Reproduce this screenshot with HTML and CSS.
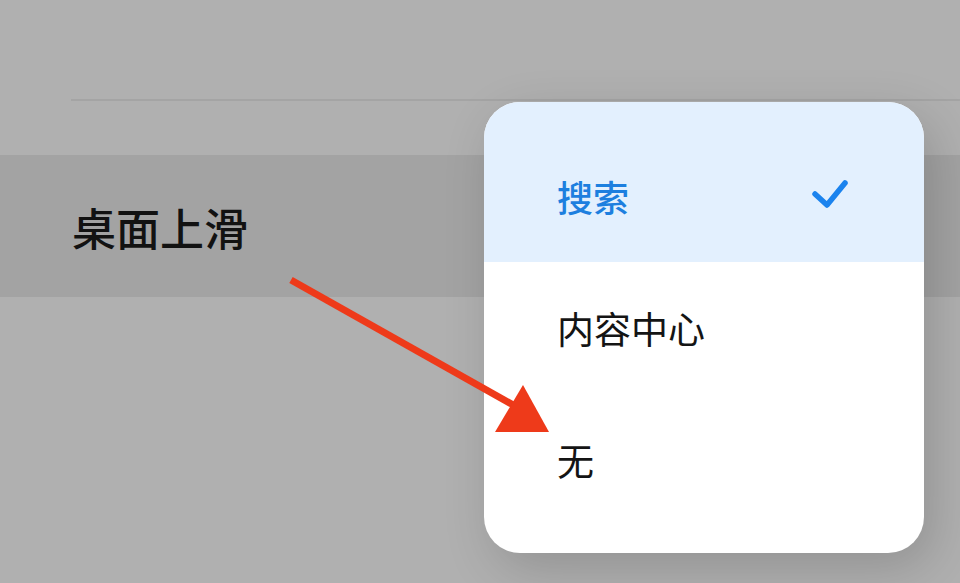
FILE: index.html
```html
<!DOCTYPE html>
<html lang="zh">
<head>
<meta charset="utf-8">
<link rel="stylesheet" href="styles.css">
</head>
<body>
<div class="screen">
  <div class="top-area">
    <div class="divider"></div>
  </div>
  <div class="row">
    <span class="row-label">桌面上滑</span>
  </div>
  <div class="menu">
    <div class="menu-item selected first">
      <span>搜索</span>
      <svg class="check" width="36" height="30" viewBox="0 0 36 30"><polyline points="3,15 15,26 33,4" fill="none" stroke="#1b83ee" stroke-width="5.5" stroke-linecap="round" stroke-linejoin="round"/></svg>
    </div>
    <div class="menu-item"><span>内容中心</span></div>
    <div class="menu-item"><span>无</span></div>
  </div>
  <svg class="arrow" width="960" height="583" viewBox="0 0 960 583">
    <line x1="291" y1="280" x2="515" y2="406" stroke="#ee3a1a" stroke-width="7"/>
    <polygon points="523,385 495,432 549,432" fill="#ee3a1a"/>
  </svg>
</div>
</body>
</html>
```
FILE: styles.css
```css
html, body {
  margin: 0;
  padding: 0;
}
body {
  width: 960px;
  height: 583px;
  overflow: hidden;
  background: #b0b0b0;
  font-family: "Noto Sans CJK SC", "Noto Sans", sans-serif;
}
.screen {
  position: relative;
  width: 960px;
  height: 583px;
}
.top-area {
  height: 155px;
  display: flex;
  flex-direction: column;
}
.divider {
  margin-top: 99px;
  margin-left: 71px;
  height: 2px;
  background: #a4a4a4;
}
.row {
  height: 142px;
  background: #a3a3a3;
  display: flex;
  align-items: center;
  padding-left: 72px;
}
.row-label {
  font-size: 44px;
  font-weight: 500;
  color: #121212;
  line-height: 1;
  margin-top: 2px;
}
.menu {
  position: absolute;
  left: 484px;
  top: 102px;
  width: 440px;
  background: #ffffff;
  border-radius: 36px;
  overflow: hidden;
  padding-bottom: 27px;
  box-shadow: 10px 16px 50px rgba(0, 0, 0, 0.17);
}
.menu-item {
  height: 132px;
  display: flex;
  align-items: center;
  justify-content: space-between;
  padding: 0 76px 0 73px;
  font-size: 37px;
  font-weight: 400;
  color: #141414;
  line-height: 1;
}
.menu-item.first {
  height: 132px;
  padding-top: 28px;
}
.menu-item.selected {
  background: #e3f0fe;
  color: #1d7fdf;
  font-size: 36px;
  font-weight: 500;
}
.check {
  display: block;
  margin-top: -4px;
}
.arrow {
  position: absolute;
  left: 0;
  top: 0;
  pointer-events: none;
}
```
